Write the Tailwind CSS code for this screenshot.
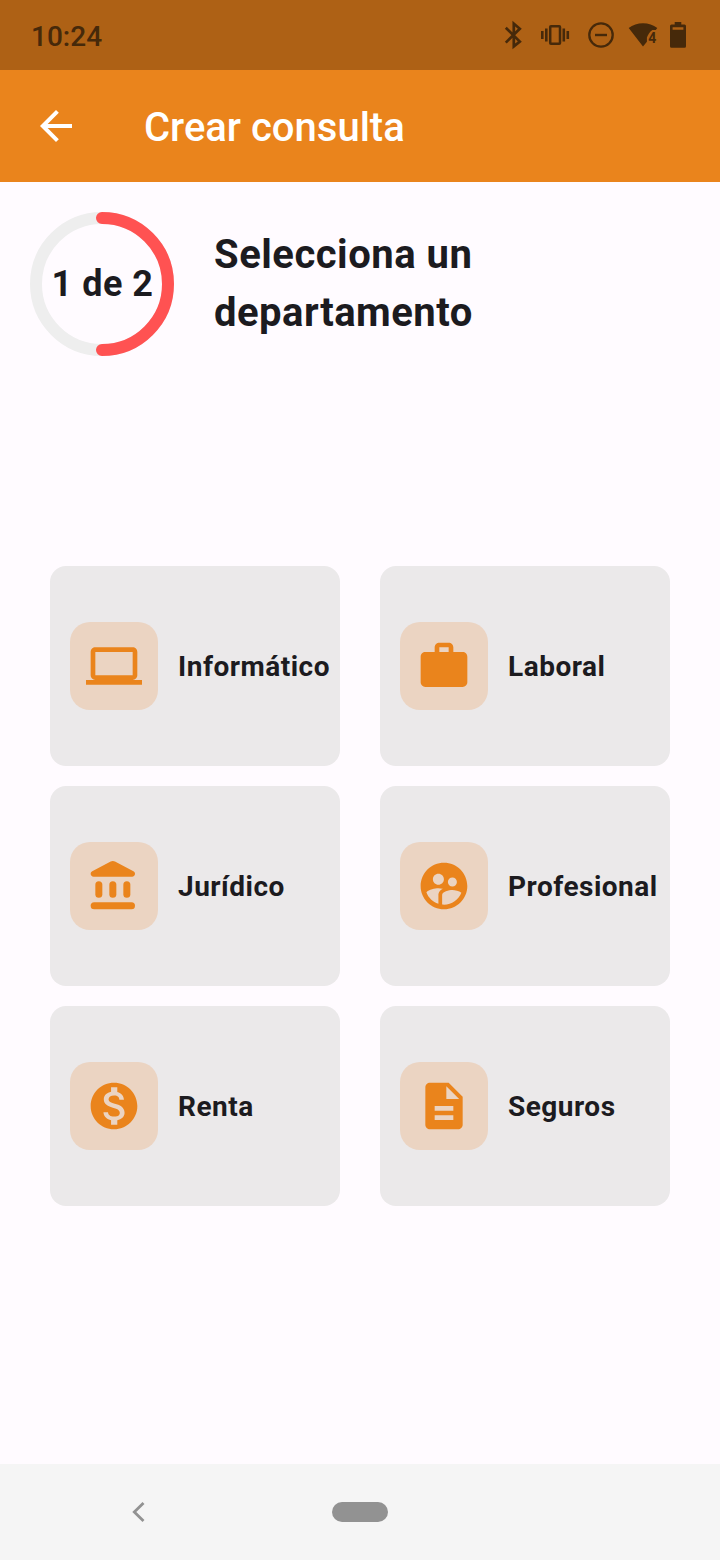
<!DOCTYPE html>
<html lang="es">
<head>
<meta charset="utf-8">
<title>Crear consulta</title>
<script src="https://cdn.jsdelivr.net/npm/@tailwindcss/browser@4"></script>
</head>
<body class="flex h-[1560px] w-[720px] flex-col overflow-hidden bg-[#fffbff] font-['Roboto',sans-serif] text-[#1c1b1f]">
  <div class="flex h-[70px] shrink-0 items-center justify-between bg-[#ae6115] pl-[31px] text-[#46290a]">
    <span class="pt-1 text-[28px] leading-8 font-medium">10:24</span>
    <svg class="h-[70px] w-[220px]" viewBox="500 0 220 70" fill="currentColor">
      <path d="M505.8 27.8L519.8 41.6L513.8 46.4V23.6L519.8 28.8L505.8 42.6" fill="none" stroke="currentColor" stroke-width="2.7"/>
      <path d="M541 31h2.6v8H541zM545 28.5h2.6v13H545zM562.5 28.5h2.6v13h-2.6zM566.5 31h2.6v8h-2.6z"/>
      <rect x="550.2" y="26.2" width="9.8" height="17.6" rx="0.8" fill="none" stroke="currentColor" stroke-width="2.5"/>
      <circle cx="601" cy="35" r="11.7" fill="none" stroke="currentColor" stroke-width="2.3"/>
      <path d="M595 33.8h12v2.4h-12z"/>
      <path d="M628.7 28C636.5 21.6 649.5 21.6 657.3 28L655.8 30H652.4C649.5 31.5 648 35 646.9 37.6V41.8L643 46.5Z"/>
      <text x="648.3" y="43.2" font-size="15.5" font-weight="700" textLength="8" lengthAdjust="spacingAndGlyphs">4</text>
      <path fill-rule="evenodd" d="M674.7 22h6.6v2.5h3.2a1.5 1.5 0 0 1 1.5 1.5v20.3a1.5 1.5 0 0 1-1.5 1.5h-13a1.5 1.5 0 0 1-1.5-1.5V26a1.5 1.5 0 0 1 1.5-1.5h3.2zM672.6 27.2v2.5h10.8v-2.5z"/>
    </svg>
  </div>
  <header class="flex h-28 shrink-0 items-center bg-[#ea841c] pl-8 text-white">
    <svg class="size-12" viewBox="0 0 24 24" fill="currentColor"><path d="M20 11H7.83l5.59-5.59L12 4l-8 8 8 8 1.41-1.41L7.83 13H20v-2z"/></svg>
    <h1 class="ml-16 pt-1 text-[40px] leading-none font-medium">Crear consulta</h1>
  </header>
  <main class="flex grow flex-col">
    <section class="flex items-center pt-[30px] pl-[30px]">
      <div class="grid size-36 shrink-0 place-items-center">
        <svg class="col-start-1 row-start-1 size-36" viewBox="0 0 144 144" fill="none" stroke-width="12">
          <circle cx="72" cy="72" r="66" stroke="#eeeeee"/>
          <path d="M72 6A66 66 0 0 1 72 138" stroke="#ff5252" stroke-linecap="round"/>
        </svg>
        <span class="col-start-1 row-start-1 pl-px text-[36px] leading-none font-bold tracking-[0.5px] whitespace-nowrap">1 de 2</span>
      </div>
      <h2 class="ml-10 text-[40px] leading-[58px] font-bold tracking-[0.5px]">Selecciona un<br>departamento</h2>
    </section>
    <section class="mx-[50px] mt-[210px] grid grid-cols-2 gap-x-10 gap-y-5 text-[28px] font-bold tracking-[0.5px]">
      <div class="flex h-[200px] items-center gap-5 rounded-2xl bg-[#ebe9ea] pl-5">
        <div class="flex size-[88px] shrink-0 items-center justify-center rounded-[20px] bg-[#ebd4c2] text-[#ea841c]">
          <svg class="size-14" viewBox="0 0 24 24" fill="currentColor"><path d="M20 18c1.1 0 1.99-.9 1.99-2L22 6c0-1.1-.9-2-2-2H4c-1.1 0-2 .9-2 2v10c0 1.1.9 2 2 2H0v2h24v-2h-4zM4 6h16v10H4V6z"/></svg>
        </div>
        <span class="pt-0.5">Informático</span>
      </div>
      <div class="flex h-[200px] items-center gap-5 rounded-2xl bg-[#ebe9ea] pl-5">
        <div class="flex size-[88px] shrink-0 items-center justify-center rounded-[20px] bg-[#ebd4c2] text-[#ea841c]">
          <svg class="size-14" viewBox="0 0 24 24" fill="currentColor"><path d="M20 6h-4V4c0-1.1-.9-2-2-2h-4c-1.1 0-2 .9-2 2v2H4c-1.1 0-2 .9-2 2v11c0 1.1.9 2 2 2h16c1.1 0 2-.9 2-2V8c0-1.1-.9-2-2-2zm-6 0h-4V4h4v2z"/></svg>
        </div>
        <span class="pt-0.5">Laboral</span>
      </div>
      <div class="flex h-[200px] items-center gap-5 rounded-2xl bg-[#ebe9ea] pl-5">
        <div class="flex size-[88px] shrink-0 items-center justify-center rounded-[20px] bg-[#ebd4c2] text-[#ea841c]">
          <svg class="size-14" viewBox="0 0 24 24" fill="currentColor"><rect x="4" y="10" width="3" height="7" rx="1.5"/><rect x="10" y="10" width="3" height="7" rx="1.5"/><rect x="16" y="10" width="3" height="7" rx="1.5"/><rect x="2" y="19" width="19" height="3" rx="1.5"/><path d="M10.57 1.49l-7.9 4.16c-.41.21-.67.64-.67 1.1C2 7.44 2.56 8 3.25 8h16.51C20.44 8 21 7.44 21 6.75c0-.46-.26-.89-.67-1.1l-7.9-4.16c-.58-.31-1.28-.31-1.86 0z"/></svg>
        </div>
        <span class="pt-0.5">Jurídico</span>
      </div>
      <div class="flex h-[200px] items-center gap-5 rounded-2xl bg-[#ebe9ea] pl-5">
        <div class="flex size-[88px] shrink-0 items-center justify-center rounded-[20px] bg-[#ebd4c2] text-[#ea841c]">
          <svg class="size-14" viewBox="0 0 24 24" fill="currentColor"><path d="M11.99 2c-5.52 0-10 4.48-10 10s4.48 10 10 10 10-4.48 10-10-4.48-10-10-10zm3.61 6.34c1.07 0 1.93.86 1.93 1.93 0 1.07-.86 1.93-1.93 1.93-1.07 0-1.93-.86-1.93-1.93-.01-1.07.86-1.93 1.93-1.93zm-6-1.58c1.3 0 2.36 1.06 2.36 2.36 0 1.3-1.06 2.36-2.36 2.36s-2.36-1.06-2.36-2.36c0-1.31 1.05-2.36 2.36-2.36zm0 9.13v3.75c-2.4-.75-4.3-2.6-5.14-4.96 1.05-1.12 3.67-1.69 5.14-1.69.53 0 1.2.08 1.9.22-1.64.87-1.9 2.02-1.9 2.68zM11.99 20c-.27 0-.53-.01-.79-.04v-4.07c0-1.42 2.94-2.13 4.4-2.13 1.07 0 2.92.39 3.84 1.15-1.17 2.97-4.06 5.09-7.45 5.09z"/></svg>
        </div>
        <span class="pt-0.5">Profesional</span>
      </div>
      <div class="flex h-[200px] items-center gap-5 rounded-2xl bg-[#ebe9ea] pl-5">
        <div class="flex size-[88px] shrink-0 items-center justify-center rounded-[20px] bg-[#ebd4c2] text-[#ea841c]">
          <svg class="size-14" viewBox="0 0 24 24" fill="currentColor"><path d="M12 2C6.48 2 2 6.48 2 12s4.48 10 10 10 10-4.48 10-10S17.52 2 12 2zm1.41 16.09V20h-2.67v-1.93c-1.71-.36-3.16-1.46-3.27-3.4h1.96c.1 1.05.82 1.87 2.65 1.87 1.96 0 2.4-.98 2.4-1.59 0-.83-.44-1.61-2.67-2.14-2.48-.6-4.18-1.62-4.18-3.67 0-1.72 1.39-2.84 3.11-3.21V4h2.67v1.95c1.86.45 2.79 1.86 2.85 3.39H14.3c-.05-1.11-.64-1.87-2.22-1.87-1.5 0-2.4.68-2.4 1.64 0 .84.65 1.39 2.67 1.91s4.18 1.39 4.18 3.91c-.01 1.83-1.38 2.83-3.12 3.16z"/></svg>
        </div>
        <span class="pt-0.5">Renta</span>
      </div>
      <div class="flex h-[200px] items-center gap-5 rounded-2xl bg-[#ebe9ea] pl-5">
        <div class="flex size-[88px] shrink-0 items-center justify-center rounded-[20px] bg-[#ebd4c2] text-[#ea841c]">
          <svg class="size-14" viewBox="0 0 24 24" fill="currentColor"><path d="M14 2H6c-1.1 0-1.99.9-1.99 2L4 20c0 1.1.89 2 1.99 2H18c1.1 0 2-.9 2-2V8l-6-6zm2 16H8v-2h8v2zm0-4H8v-2h8v2zm-3-5V3.5L18.5 9H13z"/></svg>
        </div>
        <span class="pt-0.5">Seguros</span>
      </div>
    </section>
  </main>
  <nav class="flex h-24 shrink-0 items-center bg-[#f5f5f5] pl-[132px] text-[#929292]">
    <svg class="h-5 w-[13px]" viewBox="0 0 13 20" fill="none" stroke="currentColor" stroke-width="2.8"><path d="M11.5 1L2.3 10L11.5 19"/></svg>
    <div class="ml-[187px] h-5 w-14 rounded-full bg-[#929292]"></div>
  </nav>
</body>
</html>
